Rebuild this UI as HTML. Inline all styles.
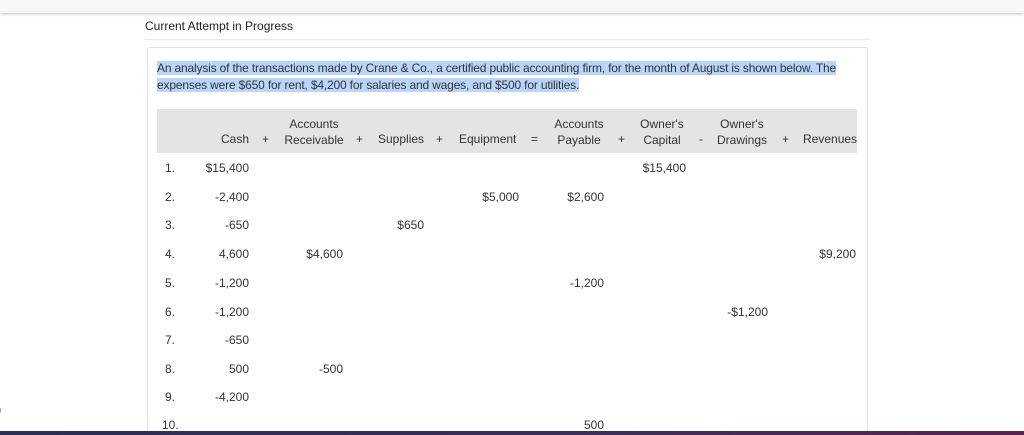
<!DOCTYPE html>
<html><head><style>
*{margin:0;padding:0;box-sizing:border-box}
html,body{width:1024px;height:435px;overflow:hidden}
body{background:#fff;font-family:"Liberation Sans",sans-serif;color:#333;position:relative}
.top{position:absolute;left:0;top:0;width:1024px;height:13px;background:#f7f7f7;box-shadow:0 1px 3px rgba(0,0,0,.25)}
.t{position:absolute;white-space:nowrap;font-size:12px;letter-spacing:0}
.r{text-align:right}
.c{text-align:center}
.hdr{position:absolute;left:157px;top:109px;width:700px;height:44px;background:#e4e4e4}
.box{position:absolute;left:147px;top:47px;width:721px;height:384px;border:1px solid #e2e2e2;border-bottom:none;border-radius:3px 3px 0 0}
.sel{background:#b9d5fb}
.bar{position:absolute;left:0;top:431px;width:1024px;height:4px;background:linear-gradient(90deg,#2b2f55,#3c2e58 60%,#5a2450)}
</style></head><body>
<div class="top"></div>
<div class="t" style="left:145px;top:19px;font-size:12px;color:#222">Current Attempt in Progress</div>
<div style="position:absolute;left:145px;top:39px;width:725px;height:1px;background:#e8e8e8"></div>
<div class="box"></div>
<div class="t" style="left:157px;top:60px;line-height:17px;font-size:12px;letter-spacing:-0.17px;color:#333"><span class="sel">An analysis of the transactions made by Crane &amp; Co., a certified public accounting firm, for the month of August is shown below. The</span><br><span class="sel">expenses were $650 for rent, $4,200 for salaries and wages, and $500 for utilities.</span></div>
<div class="hdr"></div>
<div class="t" style="left:0;top:132px;width:249px;text-align:right">Cash</div>
<div class="t" style="left:262px;top:132px">+</div>
<div class="t c" style="left:281px;top:116px;width:66px;line-height:16px">Accounts<br>Receivable</div>
<div class="t" style="left:356px;top:132px">+</div>
<div class="t" style="left:378px;top:132px">Supplies</div>
<div class="t" style="left:436px;top:132px">+</div>
<div class="t" style="left:459px;top:132px">Equipment</div>
<div class="t" style="left:531px;top:132px">=</div>
<div class="t c" style="left:550px;top:116px;width:58px;line-height:16px">Accounts<br>Payable</div>
<div class="t" style="left:618px;top:132px">+</div>
<div class="t c" style="left:635px;top:116px;width:54px;line-height:16px">Owner's<br>Capital</div>
<div class="t" style="left:699px;top:132px">-</div>
<div class="t c" style="left:712px;top:116px;width:60px;line-height:16px">Owner's<br>Drawings</div>
<div class="t" style="left:782px;top:132px">+</div>
<div class="t" style="left:803px;top:132px">Revenues</div>

<div class="t" style="left:165px;top:161px">1.</div><div class="t r" style="left:150px;top:161px;width:99px">$15,400</div><div class="t r" style="left:600px;top:161px;width:86px">$15,400</div>
<div class="t" style="left:165px;top:190px">2.</div><div class="t r" style="left:150px;top:190px;width:99px">-2,400</div><div class="t r" style="left:420px;top:190px;width:99px">$5,000</div><div class="t r" style="left:520px;top:190px;width:84px">$2,600</div>
<div class="t" style="left:165px;top:218px">3.</div><div class="t r" style="left:150px;top:218px;width:99px">-650</div><div class="t r" style="left:350px;top:218px;width:74px">$650</div>
<div class="t" style="left:165px;top:247px">4.</div><div class="t r" style="left:150px;top:247px;width:99px">4,600</div><div class="t r" style="left:250px;top:247px;width:93px">$4,600</div><div class="t r" style="left:760px;top:247px;width:96px">$9,200</div>
<div class="t" style="left:165px;top:276px">5.</div><div class="t r" style="left:150px;top:276px;width:99px">-1,200</div><div class="t r" style="left:520px;top:276px;width:84px">-1,200</div>
<div class="t" style="left:165px;top:305px">6.</div><div class="t r" style="left:150px;top:305px;width:99px">-1,200</div><div class="t r" style="left:680px;top:305px;width:88px">-$1,200</div>
<div class="t" style="left:165px;top:333px">7.</div><div class="t r" style="left:150px;top:333px;width:99px">-650</div>
<div class="t" style="left:165px;top:362px">8.</div><div class="t r" style="left:150px;top:362px;width:99px">500</div><div class="t r" style="left:250px;top:362px;width:93px">-500</div>
<div class="t" style="left:165px;top:390px">9.</div><div class="t r" style="left:150px;top:390px;width:99px">-4,200</div>
<div class="t" style="left:162px;top:418px">10.</div><div class="t r" style="left:520px;top:418px;width:84px">500</div>
<div class="t" style="left:-3px;top:402px;color:#33307a;font-size:13px">)</div>
<div class="bar"></div>
</body></html>
